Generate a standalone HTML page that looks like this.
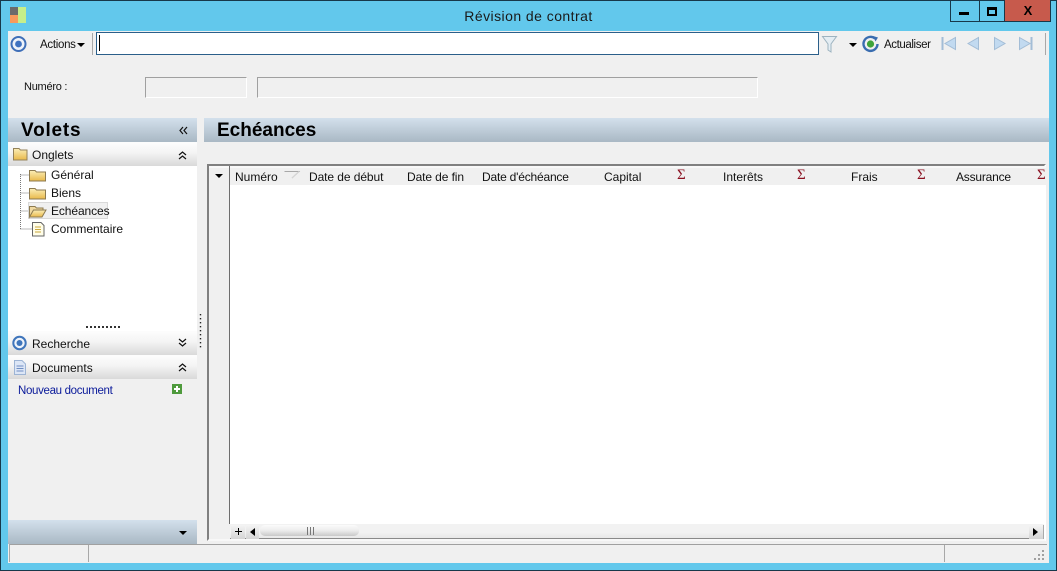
<!DOCTYPE html>
<html><head><meta charset="utf-8">
<style>
html,body{margin:0;padding:0}
body{width:1057px;height:571px;overflow:hidden;position:relative;background:#62c8ec;font:12px "Liberation Sans",sans-serif;color:#111}
.a{position:absolute}
.t{position:absolute;white-space:nowrap;line-height:14px}
.hdr{background:linear-gradient(#d3e0ec,#a9b8c4)}
.sec{background:linear-gradient(#fdfdfd 0%,#f4f4f4 45%,#d9d9d9 100%)}
svg{position:absolute;overflow:visible}
.sig{position:absolute;color:#8a1020;font:15px "Liberation Serif",serif;line-height:12px}
</style></head><body>
<svg width="0" height="0" style="left:0;top:0"><defs><linearGradient id="fg" x1="0" y1="0" x2="0" y2="1"><stop offset="0" stop-color="#fbeeb8"/><stop offset="1" stop-color="#e9b94a"/></linearGradient></defs></svg>
<div class="a" style="left:0;top:0;width:1057px;height:1px;background:#17384a"></div>
<div class="a" style="left:0;top:0;width:1px;height:571px;background:#17384a"></div>
<div class="a" style="right:0;top:0;width:1px;height:571px;background:#17384a"></div>
<div class="a" style="left:0;top:570px;width:1057px;height:1px;background:#17384a"></div>

<!-- app icon -->
<div class="a" style="left:10px;top:7px;width:8px;height:8px;background:#6b6b6b"></div>
<div class="a" style="left:10px;top:15px;width:8px;height:8px;background:#f79a5c"></div>
<div class="a" style="left:18px;top:7px;width:8px;height:16px;background:#c6ee8a"></div>
<div class="t" style="left:0;width:1057px;text-align:center;top:8px;font-size:14px;line-height:16px;color:#1a1a1a;letter-spacing:.45px">Révision de contrat</div>

<!-- window buttons -->
<div class="a" style="left:950px;top:0;width:28px;height:21px;border:1px solid #17384a;border-top:0;box-sizing:content-box"></div>
<div class="a" style="left:978px;top:0;width:26px;height:21px;border:1px solid #17384a;border-top:0;border-left:0"></div>
<div class="a" style="left:1005px;top:0;width:45px;height:21px;background:#c75a4c;border:1px solid #17384a;border-top:0;border-left:0"></div>
<div class="a" style="left:959px;top:12px;width:10px;height:3px;background:#000"></div>
<div class="a" style="left:987px;top:7px;width:10px;height:9px;box-sizing:border-box;border:2px solid #000;border-top-width:3px"></div>
<div class="t" style="left:1021px;top:4px;font:bold 13px/14px 'Liberation Sans',sans-serif;color:#000;width:14px;text-align:center">X</div>

<!-- client -->
<div class="a" style="left:8px;top:31px;width:1041px;height:532px;background:#f0f0f0"></div>

<!-- toolbar -->
<svg style="left:10px;top:35px" width="18" height="18"><circle cx="8.5" cy="9" r="7" fill="#eef3fa" stroke="#3f6fb8" stroke-width="2"/><circle cx="8.5" cy="9" r="3.4" fill="#3f72c0"/></svg>
<div class="t" style="left:40px;top:38px;font-size:11.5px;letter-spacing:-.3px">Actions</div>
<svg style="left:77px;top:43px" width="8" height="5"><path d="M0 0H8L4 4Z" fill="#000"/></svg>
<div class="a" style="left:92px;top:33px;width:1px;height:22px;background:#a8a8a8"></div>
<div class="a" style="left:96px;top:32px;width:723px;height:23px;box-sizing:border-box;background:#fff;border:1px solid #2b5f8a"></div>
<div class="a" style="left:99px;top:35px;width:1px;height:16px;background:#000"></div>
<svg style="left:822px;top:36px" width="16" height="17"><path d="M.5.5H14.5L9 8V16L6 14V8Z" fill="#e4edf3" stroke="#9db3c0"/></svg>
<svg style="left:849px;top:43px" width="8" height="5"><path d="M0 0H8L4 4Z" fill="#000"/></svg>
<svg style="left:862px;top:35px" width="18" height="18"><path d="M13 3.5A7 7 0 1 0 15.5 9" fill="none" stroke="#3a6db0" stroke-width="2.4"/><path d="M11 1L16 2.5L13.5 6.5Z" fill="#3a6db0"/><circle cx="8.5" cy="9" r="3.6" fill="#3ea33a"/></svg>
<div class="t" style="left:884px;top:38px;font-size:11.5px;letter-spacing:-.4px">Actualiser</div>
<svg style="left:941px;top:36px" width="96" height="16" fill="#c2daf0" stroke="#a3bdd6">
<path d="M1.5 1V14" stroke-width="2" fill="none"/><path d="M14.5 1.5V13.5L4 7.5Z"/>
<path d="M27 7.5L37.5 1.5V13.5Z"/>
<path d="M53.5 1.5L64 7.5L53.5 13.5Z"/>
<path d="M78.5 1.5L89 7.5L78.5 13.5Z"/><path d="M90.5 1V14" stroke-width="2" fill="none"/>
</svg>
<div class="a" style="left:1045px;top:33px;width:1px;height:22px;background:#a8a8a8"></div>

<!-- numero row -->
<div class="t" style="left:24px;top:80px;letter-spacing:-.25px;font-size:11px">Numéro :</div>
<div class="a" style="left:145px;top:77px;width:102px;height:21px;box-sizing:border-box;border:1px solid;border-color:#a0a0a0 #fff #fff #a0a0a0"></div>
<div class="a" style="left:257px;top:77px;width:501px;height:21px;box-sizing:border-box;border:1px solid;border-color:#a0a0a0 #fff #fff #a0a0a0"></div>

<!-- left panel -->
<div class="a" style="left:8px;top:118px;width:189px;height:406px;background:#f0f0f0"></div>
<div class="a hdr" style="left:8px;top:118px;width:189px;height:24px"></div>
<div class="t" style="left:21px;top:120px;font:bold 19px/21px 'Liberation Sans',sans-serif;color:#000;letter-spacing:.8px">Volets</div>
<svg style="left:179px;top:126px" width="9" height="9" fill="none" stroke="#111" stroke-width="1.2"><path d="M4 1L1 4.5L4 8M8 1L5 4.5L8 8"/></svg>
<div class="a" style="left:8px;top:166px;width:189px;height:160px;background:#fff"></div>
<div class="a sec" style="left:8px;top:142px;width:189px;height:24px"></div>
<svg style="left:13px;top:147px" width="15" height="14"><path d="M.5 1.5H6L7.5 3H14V13H.5Z" fill="url(#fg)" stroke="#94825a"/></svg>
<div class="t" style="left:32px;top:148px">Onglets</div>
<svg style="left:178px;top:151px" width="9" height="9" fill="none" stroke="#111" stroke-width="1.2"><path d="M1 4L4.5 1L8 4M1 8L4.5 5L8 8"/></svg>

<!-- tree -->
<svg style="left:18px;top:174px" width="14" height="58" fill="none" stroke="#777" stroke-dasharray="1 1"><path d="M2.5 0V55M2.5 1H12M2.5 19H12M2.5 37H12M2.5 55H14"/></svg>
<svg style="left:29px;top:168px" width="18" height="14"><path d="M.5 2.5H6L7.5 4H16.5V13H.5Z" fill="url(#fg)" stroke="#8c7a50"/></svg>
<svg style="left:29px;top:186px" width="18" height="14"><path d="M.5 2.5H6L7.5 4H16.5V13H.5Z" fill="url(#fg)" stroke="#8c7a50"/></svg>
<div class="a" style="left:28px;top:202px;width:80px;height:17px;box-sizing:border-box;background:#f0f0f0;border:1px solid #d9d9d9"></div>
<svg style="left:29px;top:204px" width="18" height="14"><path d="M.5 2.5H6L7.5 4H14V6H5L.5 13Z" fill="#f0d9a0" stroke="#8c7a50"/><path d="M.5 13L4.5 6H17L13 13Z" fill="url(#fg)" stroke="#8c7a50"/></svg>
<svg style="left:32px;top:222px" width="13" height="15"><path d="M.5.5H9L12 3.5V14H.5Z" fill="#fffde8" stroke="#666"/><path d="M3 5H9M3 7.5H9M3 10H9" stroke="#c9a83c"/></svg>
<div class="t" style="left:51px;top:168px">Général</div>
<div class="t" style="left:51px;top:186px">Biens</div>
<div class="t" style="left:51px;top:204px;letter-spacing:-.1px">Echéances</div>
<div class="t" style="left:51px;top:222px">Commentaire</div>

<!-- grip -->
<div class="a" style="left:8px;top:326px;width:189px;height:5px;background:#fff"></div>
<svg style="left:86px;top:326px" width="34" height="2"><path d="M0 1H34" stroke="#333" stroke-dasharray="2 2" stroke-width="2"/></svg>

<div class="a sec" style="left:8px;top:331px;width:189px;height:24px"></div>
<svg style="left:12px;top:335px" width="16" height="16"><circle cx="7.5" cy="8" r="6.2" fill="#eef3fa" stroke="#3f75bb" stroke-width="2"/><circle cx="7.5" cy="8" r="3" fill="#3f75bb"/></svg>
<div class="t" style="left:32px;top:337px">Recherche</div>
<svg style="left:178px;top:338px" width="9" height="9" fill="none" stroke="#111" stroke-width="1.2"><path d="M1 1L4.5 4L8 1M1 5L4.5 8L8 5"/></svg>

<div class="a sec" style="left:8px;top:355px;width:189px;height:24px"></div>
<svg style="left:14px;top:360px" width="12" height="15"><path d="M.5.5H8L11.5 4V14.5H.5Z" fill="#dce6f6" stroke="#9db4d4"/><path d="M2.5 6H9.5M2.5 8.5H9.5M2.5 11H9.5" stroke="#6f8fc4"/></svg>
<div class="t" style="left:32px;top:361px">Documents</div>
<svg style="left:178px;top:363px" width="9" height="9" fill="none" stroke="#111" stroke-width="1.2"><path d="M1 4L4.5 1L8 4M1 8L4.5 5L8 8"/></svg>
<div class="t" style="left:18px;top:384px;color:#0a1a9a;font-size:11.5px;letter-spacing:-.33px">Nouveau document</div>
<div class="a" style="left:172px;top:384px;width:10px;height:10px;background:#4e9a3c"></div>
<div class="a" style="left:176px;top:386px;width:2px;height:6px;background:#fff"></div>
<div class="a" style="left:174px;top:388px;width:6px;height:2px;background:#fff"></div>

<div class="a hdr" style="left:8px;top:520px;width:189px;height:24px"></div>
<svg style="left:179px;top:531px" width="8" height="5"><path d="M0 0H8L4 4Z" fill="#000"/></svg>

<!-- splitter -->
<svg style="left:200px;top:314px" width="2" height="36"><path d="M.5 0V36" stroke="#222" stroke-width="1.4" stroke-dasharray="1.4 2.6"/></svg>

<!-- right -->
<div class="a hdr" style="left:204px;top:118px;width:845px;height:24px"></div>
<div class="t" style="left:217px;top:120px;font:bold 19px/21px 'Liberation Sans',sans-serif;color:#000">Echéances</div>

<!-- grid -->
<div class="a" style="left:207px;top:164px;width:839px;height:377px;box-sizing:border-box;background:#f0f0f0;border:2px solid;border-color:#808080 #fff #f8f8f8 #808080"></div>
<div class="a" style="left:230px;top:166px;width:816px;height:358px;background:#fff"></div>
<div class="a" style="left:209px;top:166px;width:837px;height:2px;background:#f8f8f8"></div>
<div class="a" style="left:230px;top:168px;width:816px;height:17px;background:#f0f0f0"></div>
<div class="a" style="left:229px;top:166px;width:1px;height:358px;background:#6e6e6e"></div>
<svg style="left:215px;top:174px" width="8" height="5"><path d="M0 0H8L4 4Z" fill="#000"/></svg>
<div class="t" style="left:235px;top:170px">Numéro</div>
<svg style="left:284px;top:171px" width="16" height="8" fill="none"><path d="M.5.5H15L8 7" stroke="#a8a8a8"/><path d="M8 7L15 .5" stroke="#d8d8d8"/></svg>
<div class="t" style="left:309px;top:170px;letter-spacing:-.08px">Date de début</div>
<div class="t" style="left:407px;top:170px;letter-spacing:-.1px">Date de fin</div>
<div class="t" style="left:482px;top:170px;letter-spacing:-.2px">Date d'échéance</div>
<div class="t" style="left:604px;top:170px">Capital</div>
<div class="sig" style="left:677px;top:169px">Σ</div>
<div class="t" style="left:723px;top:170px">Interêts</div>
<div class="sig" style="left:797px;top:169px">Σ</div>
<div class="t" style="left:851px;top:170px">Frais</div>
<div class="sig" style="left:917px;top:169px">Σ</div>
<div class="t" style="left:956px;top:170px;letter-spacing:-.2px">Assurance</div>
<div class="sig" style="left:1037px;top:169px;width:8px;overflow:hidden">Σ</div>

<!-- scrollbar -->
<div class="a" style="left:230px;top:524px;width:814px;height:14px;background:linear-gradient(#f2f2f2,#f2f2f2 60%,#e8e8e8);border-bottom:1px solid #8a8a8a"></div>
<div class="a" style="left:231px;top:525px;width:14px;height:14px;background:linear-gradient(#f4f4f4,#d4d4d4)"></div>
<div class="a" style="left:235px;top:531px;width:7px;height:1px;background:#000"></div>
<div class="a" style="left:238px;top:528px;width:1px;height:7px;background:#000"></div>
<div class="a" style="left:246px;top:525px;width:13px;height:14px;background:linear-gradient(#f4f4f4,#d4d4d4)"></div>
<svg style="left:250px;top:528px" width="6" height="8"><path d="M5 0V8L0 4Z" fill="#000"/></svg>
<div class="a" style="left:260px;top:525px;width:99px;height:11px;border-radius:5px;background:linear-gradient(#fbfbfb,#ececec 50%,#c9c9c9)"></div>
<svg style="left:306px;top:527px" width="9" height="8"><path d="M1.5 0V8M4.5 0V8M7.5 0V8" stroke="#777"/></svg>
<div class="a" style="left:1029px;top:525px;width:14px;height:14px;background:linear-gradient(#f4f4f4,#d4d4d4);border-right:1px solid #aaa"></div>
<svg style="left:1033px;top:528px" width="6" height="8"><path d="M0 0V8L5 4Z" fill="#000"/></svg>

<!-- status bar -->
<div class="a" style="left:8px;top:544px;width:1041px;height:19px;background:#f0f0f0"></div>
<div class="a" style="left:9px;top:544px;width:1038px;height:1px;background:#a0a0a0"></div>
<div class="a" style="left:9px;top:544px;width:1px;height:18px;background:#a8a8a8"></div>
<div class="a" style="left:88px;top:545px;width:1px;height:17px;background:#a8a8a8"></div>
<div class="a" style="left:944px;top:545px;width:1px;height:17px;background:#a8a8a8"></div>
<svg style="left:1033px;top:550px" width="12" height="12" fill="#a0a0a0"><rect x="9" y="0" width="2" height="2"/><rect x="5" y="4" width="2" height="2"/><rect x="9" y="4" width="2" height="2"/><rect x="1" y="8" width="2" height="2"/><rect x="5" y="8" width="2" height="2"/><rect x="9" y="8" width="2" height="2"/></svg>
</body></html>
